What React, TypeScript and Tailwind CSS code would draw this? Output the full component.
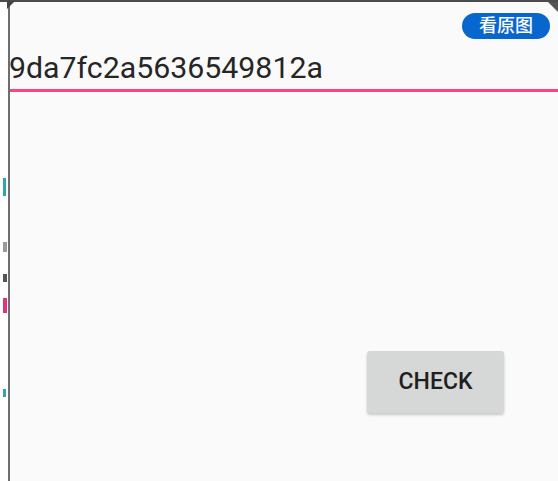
export default function App() {
  return (
    <div
      className="relative flex h-[481px] w-[558px] flex-col overflow-hidden bg-white"
      style={{ fontFamily: "Roboto, 'Noto Sans CJK SC', sans-serif" }}
    >
      <div className="h-[2px] w-full bg-[#4b4b4b]" />
      <div className="flex flex-1">
        {/* left strip with clipped text fragments */}
        <div className="flex w-[8px] flex-col bg-white">
          <div className="mt-[176px] ml-[3px] h-[18px] w-[3px] bg-[#2aa6b5]" />
          <div className="mt-[46px] ml-[3px] h-[10px] w-[4px] bg-[#9a9a9a]" />
          <div className="mt-[22px] ml-[3px] h-[8px] w-[4px] bg-[#555]" />
          <div className="mt-[16px] ml-[3px] h-[15px] w-[4px] bg-[#e0357a]" />
          <div className="mt-[76px] ml-[3px] h-[8px] w-[3px] bg-[#2aa6b5]" />
        </div>
        <div className="w-[2px] bg-[#6d6d72]" />
        <div className="relative flex flex-1 flex-col bg-[#fafafa]">
          <div className="flex justify-end pt-[11px] pr-[8px]">
            <span className="flex h-[26px] w-[88px] items-center justify-center rounded-full bg-[#0866cf] text-[18px] font-medium leading-none text-white">
              看原图
            </span>
          </div>
          <div className="mt-[11px] -ml-px text-[30.3px] leading-[36px] text-[#262626]">
            9da7fc2a5636549812a
          </div>
          <div className="mt-[3px] h-[3px] w-full bg-[#ff4081]" />
          <div className="flex flex-1 justify-end pr-[54px] pt-[259px]">
            <button className="h-[62px] w-[137px] rounded-[3px] bg-[#d6d7d7] text-[23px] font-medium text-[#1f1f1f] shadow-[0_2px_3px_rgba(0,0,0,0.2)]">
              CHECK
            </button>
          </div>
          {/* corner marks */}
          <div className="absolute -top-px left-[-3px] h-0 w-0 border-t-[8px] border-r-[8px] border-t-[#444] border-r-transparent" />
        </div>
      </div>
      <div className="absolute top-[2px] right-0 h-0 w-0 border-t-[10px] border-l-[10px] border-t-[#555] border-l-transparent" />
    </div>
  );
}
